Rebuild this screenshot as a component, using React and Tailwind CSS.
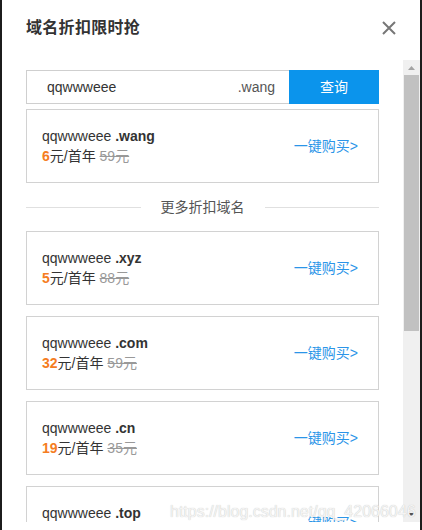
const top = { tld: '.wang', price: '6', old: '59元' }

const more = [
  { tld: '.xyz', price: '5', old: '88元' },
  { tld: '.com', price: '32', old: '59元' },
  { tld: '.cn', price: '19', old: '35元' },
  { tld: '.top', price: '9', old: '39元' },
]

function DomainCard({ d }) {
  return (
    <div className="h-[74px] border border-[#d2d2d2] flex items-center justify-between pl-[15px] pr-[20px] shrink-0">
      <div className="flex flex-col">
        <div className="text-[14px] leading-[20px] text-[#333]">
          qqwwweee <span className="font-bold">{d.tld}</span>
        </div>
        <div className="text-[14px] leading-[20px] text-[#333]">
          <span className="font-bold text-[#f57d22]">{d.price}</span>元/首年{' '}
          <span className="text-[#999] line-through">{d.old}</span>
        </div>
      </div>
      <span className="text-[14px] text-[#2b95e8]">一键购买&gt;</span>
    </div>
  )
}

export default function App() {
  return (
    <div
      className="relative w-[422px] h-[530px] bg-white border-l-2 border-r-2 border-[#1c1c1c] overflow-hidden flex flex-col"
      style={{ fontFamily: '"Liberation Sans", "Noto Sans CJK SC", sans-serif' }}
    >
      {/* Header */}
      <div className="h-[60px] shrink-0 flex items-center justify-between pl-[24px] pr-[24px] pb-[4px]">
        <h1 className="text-[16px] font-bold text-[#333] tracking-[0.3px]">域名折扣限时抢</h1>
        <svg width="14" height="14" viewBox="0 0 14 14" className="text-[#777]">
          <path d="M1 1 L13 13 M13 1 L1 13" stroke="currentColor" strokeWidth="2" />
        </svg>
      </div>

      {/* Body with scrollbar */}
      <div className="flex h-[462px] shrink-0 overflow-hidden">
        <div className="w-[353px] ml-[24px] pt-[10px] flex flex-col overflow-hidden">
          <div className="h-[34px] flex shrink-0">
            <div className="flex-1 border border-[#cfcfcf] border-r-0 flex items-center justify-between pl-[20px] pr-[14px] text-[14px] text-[#333]">
              <span>qqwwweee</span>
              <span className="text-[#555]">.wang</span>
            </div>
            <button className="w-[90px] bg-[#0b94ec] text-white text-[14px]">查询</button>
          </div>

          <div className="mt-[5px]">
            <DomainCard d={top} />
          </div>

          <div className="flex items-center h-[48px] shrink-0">
            <div className="flex-1 h-px bg-[#e0e0e0]" />
            <span className="px-[20px] text-[14px] text-[#555]">更多折扣域名</span>
            <div className="flex-1 h-px bg-[#e0e0e0]" />
          </div>

          <div className="flex flex-col gap-[11px]">
            {more.map((d) => (
              <DomainCard key={d.tld} d={d} />
            ))}
          </div>
        </div>

        {/* Scrollbar */}
        <div className="ml-auto w-[17px] bg-[#f0f0f0] flex flex-col">
          <div className="h-[15px] flex items-center justify-center">
            <svg width="7" height="4" viewBox="0 0 7 4"><path d="M0 4 L3.5 0 L7 4 Z" fill="#a3a3a3" /></svg>
          </div>
          <div className="mx-[1px] h-[256px] bg-[#c1c1c1]" />
          <div className="flex-1" />
          <div className="h-[15px] flex items-center justify-center">
            <svg width="7" height="4" viewBox="0 0 7 4"><path d="M0 0 L7 0 L3.5 4 Z" fill="#505050" /></svg>
          </div>
        </div>
      </div>

      {/* Watermark */}
      <div className="absolute left-[168px] top-[502px] text-[16px] leading-[20px] text-[#f4f4f4]" style={{ textShadow: '0 0 1px #bdbdbd' }}>
        https://blog.csdn.net/qq_42066046
      </div>
    </div>
  )
}
